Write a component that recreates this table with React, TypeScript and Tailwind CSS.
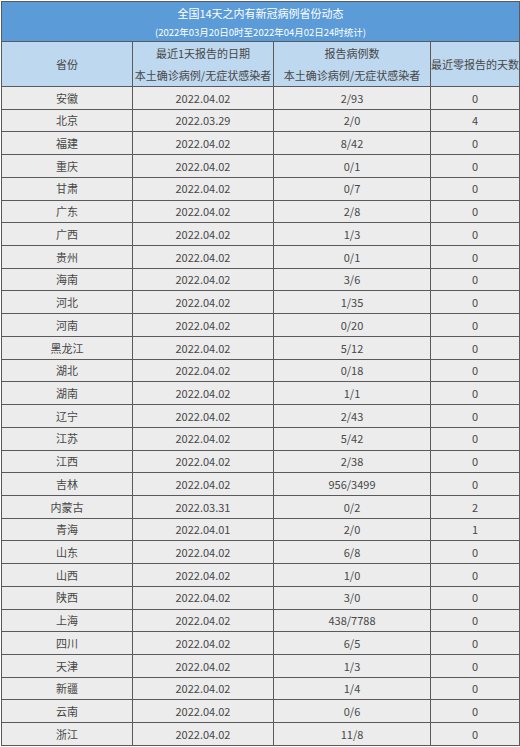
const ROWS: [string, string, string, string][] = [
  ["安徽", "2022.04.02", "2/93", "0"],
  ["北京", "2022.03.29", "2/0", "4"],
  ["福建", "2022.04.02", "8/42", "0"],
  ["重庆", "2022.04.02", "0/1", "0"],
  ["甘肃", "2022.04.02", "0/7", "0"],
  ["广东", "2022.04.02", "2/8", "0"],
  ["广西", "2022.04.02", "1/3", "0"],
  ["贵州", "2022.04.02", "0/1", "0"],
  ["海南", "2022.04.02", "3/6", "0"],
  ["河北", "2022.04.02", "1/35", "0"],
  ["河南", "2022.04.02", "0/20", "0"],
  ["黑龙江", "2022.04.02", "5/12", "0"],
  ["湖北", "2022.04.02", "0/18", "0"],
  ["湖南", "2022.04.02", "1/1", "0"],
  ["辽宁", "2022.04.02", "2/43", "0"],
  ["江苏", "2022.04.02", "5/42", "0"],
  ["江西", "2022.04.02", "2/38", "0"],
  ["吉林", "2022.04.02", "956/3499", "0"],
  ["内蒙古", "2022.03.31", "0/2", "2"],
  ["青海", "2022.04.01", "2/0", "1"],
  ["山东", "2022.04.02", "6/8", "0"],
  ["山西", "2022.04.02", "1/0", "0"],
  ["陕西", "2022.04.02", "3/0", "0"],
  ["上海", "2022.04.02", "438/7788", "0"],
  ["四川", "2022.04.02", "6/5", "0"],
  ["天津", "2022.04.02", "1/3", "0"],
  ["新疆", "2022.04.02", "1/4", "0"],
  ["云南", "2022.04.02", "0/6", "0"],
  ["浙江", "2022.04.02", "11/8", "0"],
];

const cell = "border border-[#5a5a5a] text-center align-middle p-0";

export default function App() {
  return (
    <div
      className="bg-white pl-[1px] pt-[1px] w-[520px] h-[747px] text-[11px] text-[#474747]"
      style={{ fontFamily: '"Noto Sans CJK SC", "Noto Sans", sans-serif' }}
    >
      <table className="w-[518px] table-fixed border-collapse">
        <colgroup>
          <col className="w-[131px]" />
          <col className="w-[141px]" />
          <col className="w-[157px]" />
          <col className="w-[89px]" />
        </colgroup>
        <thead>
          <tr className="h-[22px] bg-[#5b9bd8] text-white">
            <td colSpan={4} className="border border-b-0 border-[#5a5a5a] text-center pt-[2px] px-0 pb-0 leading-none">
              全国14天之内有新冠病例省份动态
            </td>
          </tr>
          <tr className="h-[18px] bg-[#5b9bd8] text-white">
            <td colSpan={4} className="border border-t-0 border-[#5a5a5a] text-center p-0 text-[9.5px] leading-none">
              (2022年03月20日0时至2022年04月02日24时统计)
            </td>
          </tr>
          <tr className="h-[45px] bg-[#bed8ef]">
            <td className={cell}>省份</td>
            <td className={cell}>
              <div className="flex flex-col leading-[22px]">
                <span>最近1天报告的日期</span>
                <span>本土确诊病例/无症状感染者</span>
              </div>
            </td>
            <td className={cell}>
              <div className="flex flex-col leading-[22px]">
                <span>报告病例数</span>
                <span>本土确诊病例/无症状感染者</span>
              </div>
            </td>
            <td className={cell}>最近零报告的天数</td>
          </tr>
        </thead>
        <tbody className="bg-[#ececec]">
          {ROWS.map((r) => (
            <tr key={r[0]} className="h-[22.72px]">
              <td className={cell}>{r[0]}</td>
              <td className={cell}>{r[1]}</td>
              <td className={cell}>{r[2]}</td>
              <td className={cell}>{r[3]}</td>
            </tr>
          ))}
        </tbody>
      </table>
    </div>
  );
}
